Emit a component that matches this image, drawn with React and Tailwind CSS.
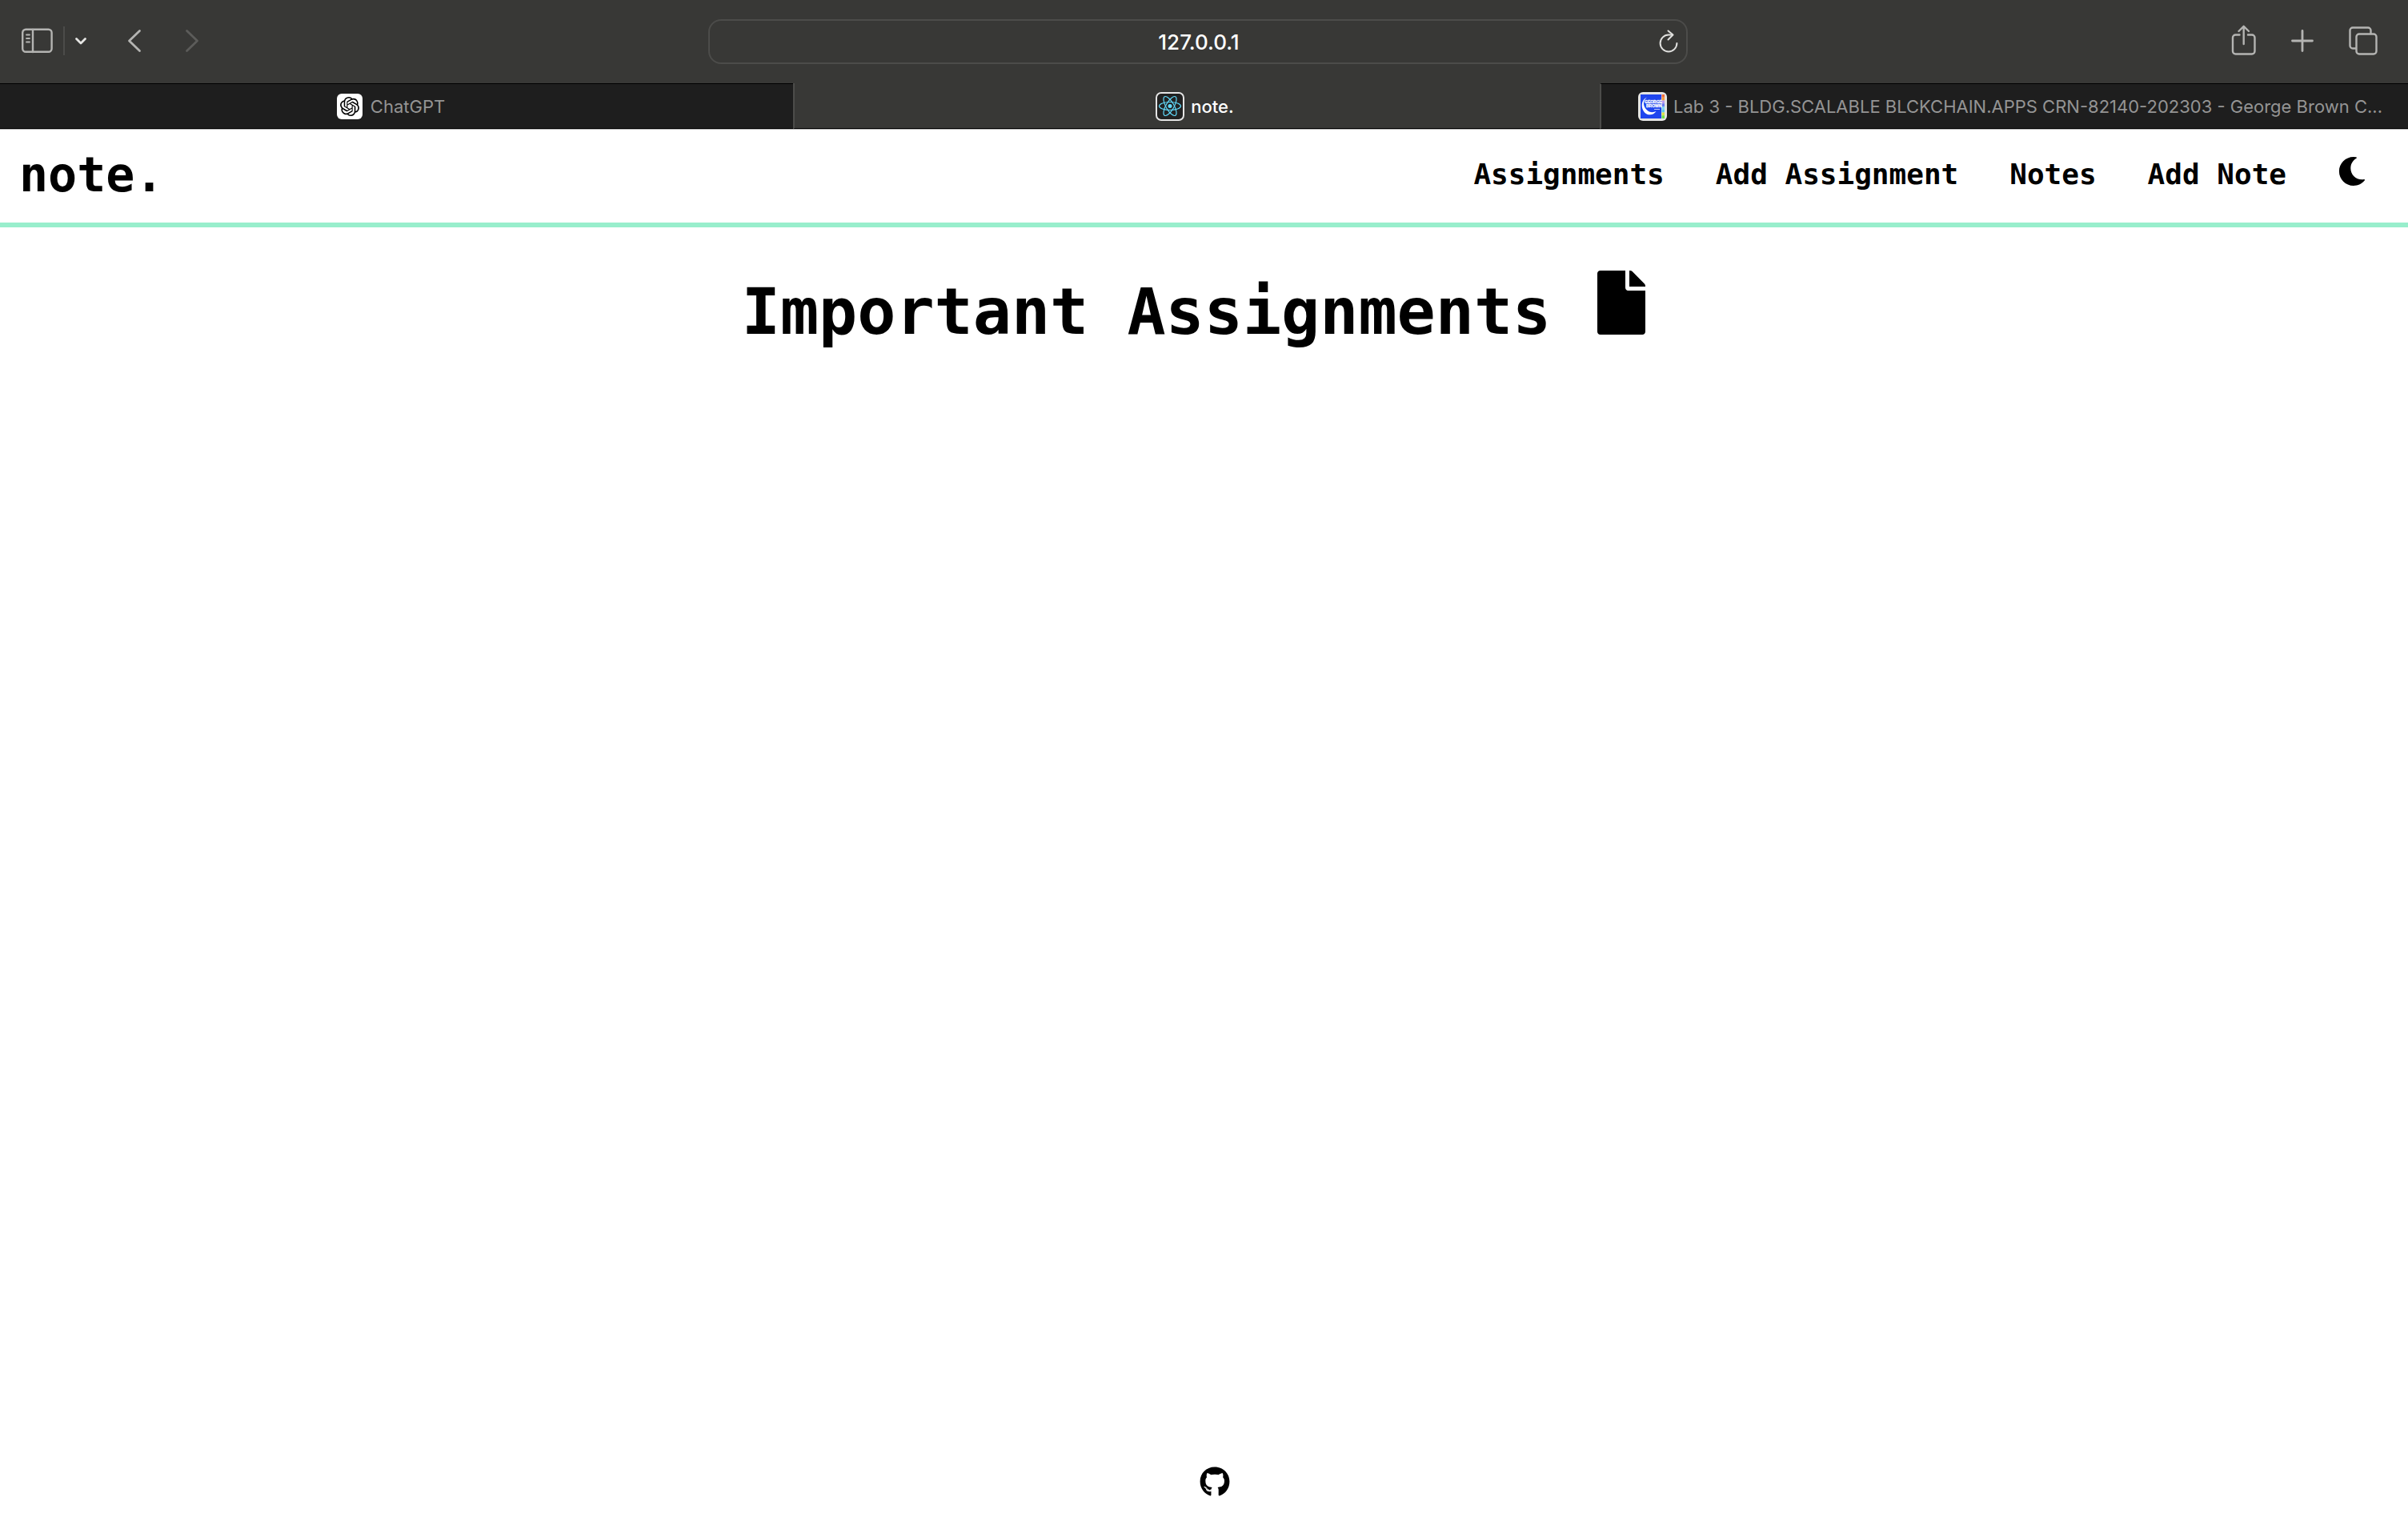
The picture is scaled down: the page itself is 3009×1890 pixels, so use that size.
import React from "react";
import { FaFile, FaMoon, FaGithub } from "react-icons/fa";
import { SiOpenai } from "react-icons/si";

const stroke = { fill: "none", stroke: "currentColor", strokeLinecap: "round", strokeLinejoin: "round" };

function SidebarIcon() {
  return (
    <svg width="40" height="32" viewBox="0 0 40 32" {...stroke} strokeWidth="2.4">
      <rect x="2.200" y="1.800" width="36.400" height="28" rx="4" />
      <path d="M15 2v28" />
      <path d="M7 8.500h4M7 13h4M7 17.500h4" strokeWidth="1.800" />
    </svg>
  );
}

function ShareIcon() {
  return (
    <svg width="32" height="40" viewBox="0 0 32 40" {...stroke} strokeWidth="2.4">
      <path d="M10.500 12.500H5.500a3.500 3.500 0 0 0-3.500 3.500v17a3.500 3.500 0 0 0 3.500 3.500h20.500a3.500 3.500 0 0 0 3.500-3.500v-17a3.500 3.500 0 0 0-3.500-3.500h-5" />
      <path d="M15.700 24V2M9.500 8l6.200-6.200L22 8" />
    </svg>
  );
}

function TabsIcon() {
  return (
    <svg width="36" height="36" viewBox="0 0 36 36" {...stroke} strokeWidth="2.4">
      <path d="M8.500 27.500H5a3.500 3.500 0 0 1-3.500-3.500V5A3.500 3.500 0 0 1 5 1.500h19A3.500 3.500 0 0 1 27.500 5v3.500" />
      <rect x="9.500" y="9.500" width="25" height="25" rx="3.500" />
    </svg>
  );
}

function ReloadIcon() {
  return (
    <svg width="24" height="30" viewBox="0 0 24 30" {...stroke} strokeWidth="2">
      <path d="M22.400 17a10.400 10.400 0 1 1-10.400-10.400h5" />
      <path d="M11.500 1.500l6 5-6 6" />
    </svg>
  );
}

function ReactFavicon() {
  return (
    <svg className="shrink-0" width="36" height="36" viewBox="0 0 36 36">
      <rect x="1" y="1" width="34" height="34" rx="6" fill="#222222" stroke="#e4e4e4" strokeWidth="2" />
      <g fill="none" stroke="#61dafb" strokeWidth="1.2">
        <ellipse cx="18" cy="17.500" rx="13.500" ry="5" />
        <ellipse cx="18" cy="17.500" rx="13.500" ry="5" transform="rotate(60 18 17.500)" />
        <ellipse cx="18" cy="17.500" rx="13.500" ry="5" transform="rotate(120 18 17.500)" />
      </g>
      <circle cx="18" cy="17.500" r="2.500" fill="#61dafb" />
    </svg>
  );
}

function CollegeFavicon() {
  const bars = ["#f4703a", "#f59a3c", "#b79af0", "#6a7df5", "#7fd3f7", "#58c7ee", "#d8e04a", "#6fe04a"];
  return (
    <svg className="shrink-0" width="36" height="36" viewBox="0 0 36 36">
      <rect width="36" height="36" rx="6" fill="#e4e4e4" />
      <rect x="3" y="3" width="26" height="30" fill="#1f45ee" />
      {bars.map((c, i) => (
        <rect key={c} x="29.500" y={3 + i * 3.75} width="3.500" height="3.75" fill={c} />
      ))}
      <path d="M11 6.500C3.500 9.500 3 19.500 8 25.500c4.500 4.500 11.500 3.500 14.500-1.500-4 2-8.500 1.500-12-2C6 17.500 5.500 11 11 6.500z" fill="#fff" />
      <path d="M8.500 10c-1.500 6 2 11.500 8.500 12.500" fill="none" stroke="#1f45ee" strokeWidth="0.900" />
      <text x="8" y="13.500" fontSize="5" fontFamily="Liberation Sans" fontWeight="bold" fill="#fff" stroke="#fff" strokeWidth="0.300">GEORGE</text>
      <text x="10" y="19" fontSize="5" fontFamily="Liberation Sans" fontWeight="bold" fill="#fff" stroke="#fff" strokeWidth="0.300">BROWN</text>
      <path d="M20 21.500h7" stroke="#fff" strokeWidth="1" opacity="0.700" />
    </svg>
  );
}

function Toolbar() {
  return (
    <div className="grid h-26 grid-cols-[885fr_1224fr_900fr] items-center bg-[#383836] text-[#b4b4b2]">
      <div className="flex items-center pb-[2px] pl-[26px]">
        <button aria-label="Show sidebar"><SidebarIcon /></button>
        <span className="ml-[13px] h-9 w-[2px] bg-[#4c4c4a]" />
        <button aria-label="Tab groups" className="ml-3 text-[#e6e6e4]">
          <svg width="16" height="12" viewBox="0 0 16 12" {...stroke} strokeWidth="2.800"><path d="M2.500 3.500l5.500 5.500 5.500-5.500" /></svg>
        </button>
        <button aria-label="Back" className="ml-[50px]">
          <svg width="18" height="30" viewBox="0 0 18 30" {...stroke} strokeWidth="2.800"><path d="M15.500 2.500L2.500 15l13 12.500" /></svg>
        </button>
        <button aria-label="Forward" className="ml-[54px] text-[#5c5c5a]">
          <svg width="18" height="30" viewBox="0 0 18 30" {...stroke} strokeWidth="2.800"><path d="M2.500 2.500L15.500 15 2.500 27.500" /></svg>
        </button>
      </div>
      <div className="flex h-14 items-center rounded-2xl border-2 border-[#4c4c4a] pr-[10px] pl-3">
        <span className="w-6" />
        <input
          aria-label="Address"
          defaultValue="127.0.0.1"
          className="min-w-0 flex-1 bg-transparent text-center text-[26px] font-medium text-white outline-none"
        />
        <button aria-label="Reload" className="text-[#e0e0de]"><ReloadIcon /></button>
      </div>
      <div className="flex items-center justify-end pr-[38px] pb-[2px]">
        <button aria-label="Share"><ShareIcon /></button>
        <button aria-label="New tab" className="ml-[42px]">
          <svg width="30" height="30" viewBox="0 0 30 30" {...stroke} strokeWidth="2.800"><path d="M15 2.500v25M2.500 15h25" /></svg>
        </button>
        <button aria-label="Tab overview" className="ml-[43px]"><TabsIcon /></button>
      </div>
    </div>
  );
}

function Tabs() {
  return (
    <div className="grid h-[58px] grid-cols-[991fr_1008fr_1010fr] border-b border-[#b8b8b8] text-[22px] text-[#949494]">
      <button className="flex items-center justify-center gap-[10px] border-y border-black bg-[#1e1e1e] pt-px pr-[14px]">
        <span className="flex size-8 items-center justify-center rounded-md bg-white text-2xl text-black"><SiOpenai /></span>
        ChatGPT
      </button>
      <button className="flex items-center justify-center gap-2 border-b border-l-2 border-b-black border-l-[#4c4c4a] bg-[#383836] pt-[2px] pr-[6px] font-medium text-white">
        <ReactFavicon />
        note.
      </button>
      <button className="flex min-w-0 items-center gap-2 border-y border-l-2 border-y-black border-l-[#4c4c4a] bg-[#1e1e1e] pt-px pr-6 pl-[46px]">
        <CollegeFavicon />
        <span className="whitespace-nowrap">Lab 3 - BLDG.SCALABLE BLCKCHAIN.APPS CRN-82140-202303 - George Brown C...</span>
      </button>
    </div>
  );
}

const links = ["Assignments", "Add Assignment", "Notes", "Add Note"];

export default function App() {
  return (
    <div className="flex min-h-screen flex-col bg-white font-['Inter',sans-serif]">
      <Toolbar />
      <Tabs />
      <div className="flex flex-1 flex-col font-['DejaVu_Sans_Mono',monospace] font-bold text-black">
        <header className="flex items-center justify-between border-b-[6px] border-[#98eecc] pr-[52px] pl-6">
          <a href="#home" className="pt-2 pb-3 text-[60px] leading-[96px]">note.</a>
          <nav className="flex items-center gap-16 pb-1 text-[36px] leading-[48px]">
            {links.map((l) => (
              <a key={l} href={"#" + l.toLowerCase().replace(" ", "-")}>{l}</a>
            ))}
            <button aria-label="Dark mode" className="pb-2"><FaMoon /></button>
          </nav>
        </header>
        <main className="flex-1 pt-[54px] pr-4">
          <h1 className="flex items-start justify-center gap-12 text-[80px] leading-[104px]">
            Important Assignments
            <FaFile />
          </h1>
        </main>
        <footer className="flex justify-center pb-5 pl-[26px] text-[38px]">
          <a href="#github" aria-label="GitHub"><FaGithub /></a>
        </footer>
      </div>
    </div>
  );
}
